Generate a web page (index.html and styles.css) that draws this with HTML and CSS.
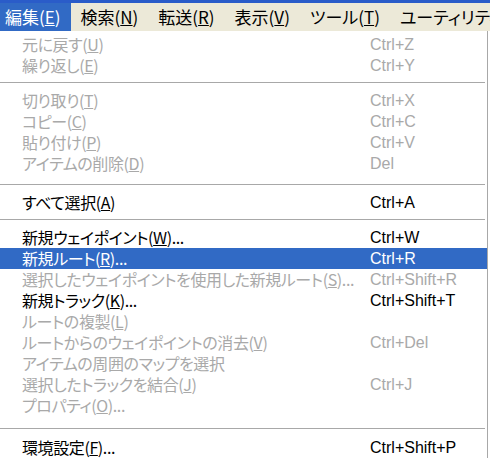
FILE: index.html
```html
<!DOCTYPE html>
<html lang="ja">
<head>
<meta charset="utf-8">
<title>編集メニュー</title>
<link rel="stylesheet" href="styles.css">
</head>
<body>
<div class="screen">
  <div class="title-edge"></div>
  <nav class="menubar">
    <span class="menu-title active">編集(<u>E</u>)</span>
    <span class="menu-title">検索(<u>N</u>)</span>
    <span class="menu-title">転送(<u>R</u>)</span>
    <span class="menu-title">表示(<u>V</u>)</span>
    <span class="menu-title">ツール(<u>T</u>)</span>
    <span class="menu-title">ユーティリティ(<u>U</u>)</span>
  </nav>
  <div class="dropdown">
    <div class="item disabled"><span class="label">元に戻す(<u>U</u>)</span><span class="key">Ctrl+Z</span></div>
    <div class="item disabled"><span class="label">繰り返し(<u>E</u>)</span><span class="key">Ctrl+Y</span></div>
    <div class="sep sep-a"></div>
    <div class="item disabled"><span class="label">切り取り(<u>T</u>)</span><span class="key">Ctrl+X</span></div>
    <div class="item disabled"><span class="label">コピー(<u>C</u>)</span><span class="key">Ctrl+C</span></div>
    <div class="item disabled"><span class="label">貼り付け(<u>P</u>)</span><span class="key">Ctrl+V</span></div>
    <div class="item disabled"><span class="label">アイテムの削除(<u>D</u>)</span><span class="key">Del</span></div>
    <div class="sep sep-b"></div>
    <div class="item"><span class="label">すべて選択(<u>A</u>)</span><span class="key">Ctrl+A</span></div>
    <div class="sep sep-a"></div>
    <div class="item"><span class="label">新規ウェイポイント(<u>W</u>)...</span><span class="key">Ctrl+W</span></div>
    <div class="item selected"><span class="label">新規ルート(<u>R</u>)...</span><span class="key">Ctrl+R</span></div>
    <div class="item disabled"><span class="label">選択したウェイポイントを使用した新規ルート(<u>S</u>)...</span><span class="key">Ctrl+Shift+R</span></div>
    <div class="item"><span class="label">新規トラック(<u>K</u>)...</span><span class="key">Ctrl+Shift+T</span></div>
    <div class="item disabled"><span class="label">ルートの複製(<u>L</u>)</span><span class="key"></span></div>
    <div class="item disabled"><span class="label">ルートからのウェイポイントの消去(<u>V</u>)</span><span class="key">Ctrl+Del</span></div>
    <div class="item disabled"><span class="label">アイテムの周囲のマップを選択</span><span class="key"></span></div>
    <div class="item disabled"><span class="label">選択したトラックを結合(<u>J</u>)</span><span class="key">Ctrl+J</span></div>
    <div class="item disabled"><span class="label">プロパティ(<u>O</u>)...</span><span class="key"></span></div>
    <div class="sep sep-c"></div>
    <div class="item"><span class="label">環境設定(<u>F</u>)...</span><span class="key">Ctrl+Shift+P</span></div>
  </div>
</div>
</body>
</html>
```

FILE: styles.css
```css
html, body {
  margin: 0;
  padding: 0;
  background: #ffffff;
}

.screen {
  width: 490px;
  height: 462px;
  overflow: hidden;
  font-family: "Noto Sans CJK JP", "Noto Sans", sans-serif;
}

.title-edge {
  height: 3px;
  background: #2a5cc9;
}

.menubar {
  display: flex;
  height: 28px;
  background: #ece9d8;
  white-space: nowrap;
  overflow: hidden;
}

.menu-title {
  display: flex;
  align-items: center;
  padding: 0 10px;
  font-size: 17px;
  line-height: 28px;
  color: #000000;
  font-feature-settings: "palt";
}

.menu-title:first-child {
  padding-left: 5px;
}

.menu-title.active {
  background: #316ac5;
  color: #ffffff;
}

.dropdown {
  width: 487px;
  padding-top: 3px;
  border-right: 1px solid #a8a8a8;
  background: #ffffff;
}

.item {
  display: grid;
  grid-template-columns: 348px 1fr;
  height: 21px;
  padding-left: 22px;
  align-items: center;
  white-space: nowrap;
  color: #000000;
}

.item .label {
  font-size: 16px;
  line-height: 21px;
  letter-spacing: -0.4px;
  font-feature-settings: "palt";
  overflow: hidden;
}

.item .key {
  font-family: "Liberation Sans", Arial, sans-serif;
  font-size: 16px;
  line-height: 21px;
}

.item.disabled {
  color: #a9a9a9;
}

.item.selected {
  background: #316ac5;
  color: #ffffff;
}

.sep {
  height: 1px;
  margin-right: 2px;
  background: #a8a8a8;
}

.sep-a {
  margin-top: 6px;
  margin-bottom: 7px;
}

.sep-b {
  margin-top: 10px;
  margin-bottom: 7px;
}

.sep-c {
  margin-top: 12px;
  margin-bottom: 8px;
}
```
